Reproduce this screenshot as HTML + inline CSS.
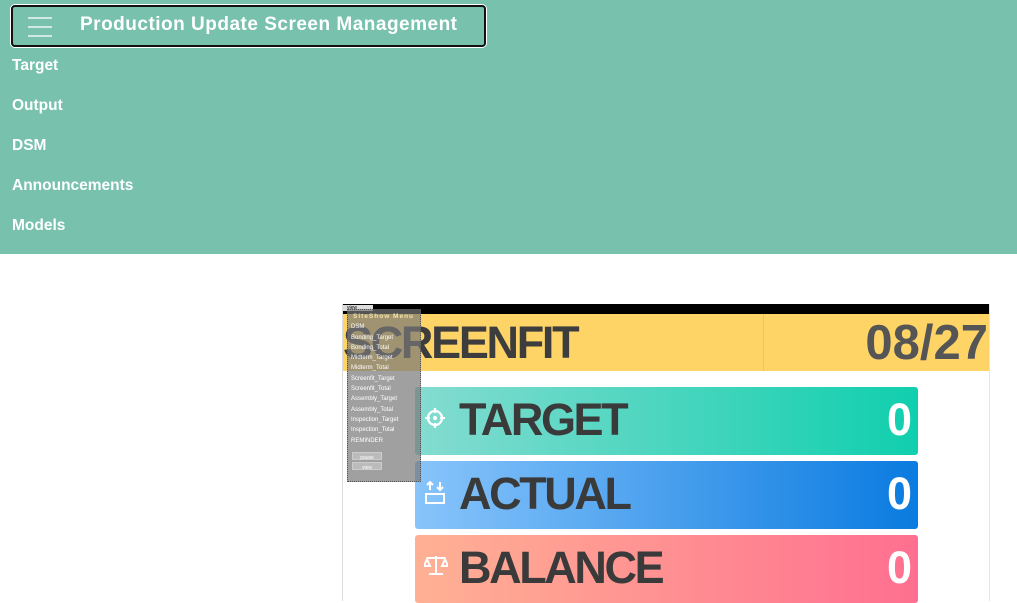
<!DOCTYPE html>
<html><head><meta charset="utf-8"><style>
*{margin:0;padding:0;box-sizing:border-box}
body{width:1017px;height:601px;overflow:hidden;background:#fff;font-family:"Liberation Sans",sans-serif;position:relative}
.top{position:absolute;left:0;top:0;width:1017px;height:254px;background:#78c2ad}
.title{position:absolute;left:11px;top:5px;width:475px;height:42px;border:2px solid #111;border-radius:4px;box-shadow:0 0 0 1px #fff}
.title .t{position:absolute;left:67px;top:7px;color:#fff;font-weight:bold;font-size:19px;letter-spacing:0.5px}
.ham{position:absolute;left:15px;top:10px;width:24px}
.ham i{display:block;height:2px;background:#e6f2ee;margin-bottom:7px;opacity:.8}
.nav a{position:absolute;left:12px;color:#fff;font-weight:bold;font-size:15.5px;text-decoration:none}
.frame{position:absolute;left:342px;top:304px;width:648px;height:297px;border-left:1px solid #ddd;border-right:1px solid #e5e5e5}
.blk{height:10px;background:#000}
.yel{height:57px;background:#fed466;position:relative}
.yel .s{position:absolute;left:0;top:3px;font-size:45px;font-weight:bold;color:#3d3d3d;letter-spacing:-2.3px}
.yel .d{position:absolute;right:1px;top:1px;font-size:49px;font-weight:bold;color:#555}
.yel .div{position:absolute;left:420px;top:0;width:1px;height:57px;background:#f0c450}
.box{position:absolute;left:72px;width:503px;height:68px;border-radius:3px}
.box .l{position:absolute;left:44px;top:7px;font-size:45px;font-weight:bold;color:#3a3a3a;letter-spacing:-2.4px}
.box .v{position:absolute;right:6px;top:7px;font-size:45px;font-weight:bold;color:#fff}
.box svg{position:absolute;left:9px;top:20px}
.ov{position:absolute;left:347px;top:309px;width:74px;height:173px;background:rgba(120,120,120,.7);border:1px dotted #555;font-size:6px;color:#fff;padding:2px 3px}
.ov .h{font-weight:bold;letter-spacing:1px;color:#f4e3a0;font-size:6.5px;margin-left:2px}
.ov div{line-height:10.3px}
.btn{width:30px;height:8px;border:1px solid #ccc;background:#bbb;font-size:5px;text-align:center;line-height:6px;margin:2px 0 0 1px}
.vt{position:absolute;left:343px;top:305px;width:30px;height:6px;background:#ddd;font-size:5px;line-height:6px;padding-left:4px}
</style></head><body>
<div class="top">
<div class="title"><div class="ham"><i></i><i></i><i></i></div><div class="t">Production Update Screen Management</div></div>
<div class="nav"><a style="top:57px">Target</a><a style="top:97px">Output</a><a style="top:137px">DSM</a><a style="top:177px">Announcements</a><a style="top:217px">Models</a></div>
</div>
<div class="frame">
<div class="blk"></div>
<div class="yel"><div class="s">SCREENFIT</div><div class="div"></div><div class="d">08/27</div></div>
<div class="box" style="top:83px;background:linear-gradient(90deg,#84dcd0,#10cfae)">
<svg width="22" height="22" viewBox="0 0 22 22" fill="none" stroke="#fff" stroke-width="2.2"><circle cx="11" cy="11" r="7"/><path d="M11 1v5M11 16v5M1 11h5M16 11h5"/><circle cx="11" cy="11" r="1" fill="#fff"/></svg>
<div class="l">TARGET</div><div class="v">0</div></div>
<div class="box" style="top:157px;background:linear-gradient(90deg,#88c4fb,#0a7be0)">
<svg width="22" height="24" viewBox="0 0 22 24" fill="none" stroke="#fff" stroke-width="2"><path d="M6 9V1M3 4l3-3 3 3M16 1v8M13 6l3 3 3-3"/><rect x="2" y="13" width="18" height="9"/></svg>
<div class="l">ACTUAL</div><div class="v">0</div></div>
<div class="box" style="top:231px;background:linear-gradient(90deg,#ffb194,#ff6f90)">
<svg width="24" height="22" viewBox="0 0 24 22" fill="none" stroke="#fff" stroke-width="2"><path d="M12 1v18M3 3h18M5 19h14M3 4l-3 7h6zM21 4l-3 7h6z"/></svg>
<div class="l">BALANCE</div><div class="v">0</div></div>
</div>
<div class="vt">view</div>
<div class="ov"><div class="h">SiteShow Menu</div>
<div>DSM</div><div>Bonding_Target</div><div>Bonding_Total</div><div>Midterm_Target</div><div>Midterm_Total</div><div>Screenfit_Target</div><div>Screenfit_Total</div><div>Assembly_Target</div><div>Assembly_Total</div><div>Inspection_Target</div><div>Inspection_Total</div><div>REMINDER</div>
<div class="btn" style="margin-top:6px">pause</div><div class="btn">view</div></div>
</body></html>
